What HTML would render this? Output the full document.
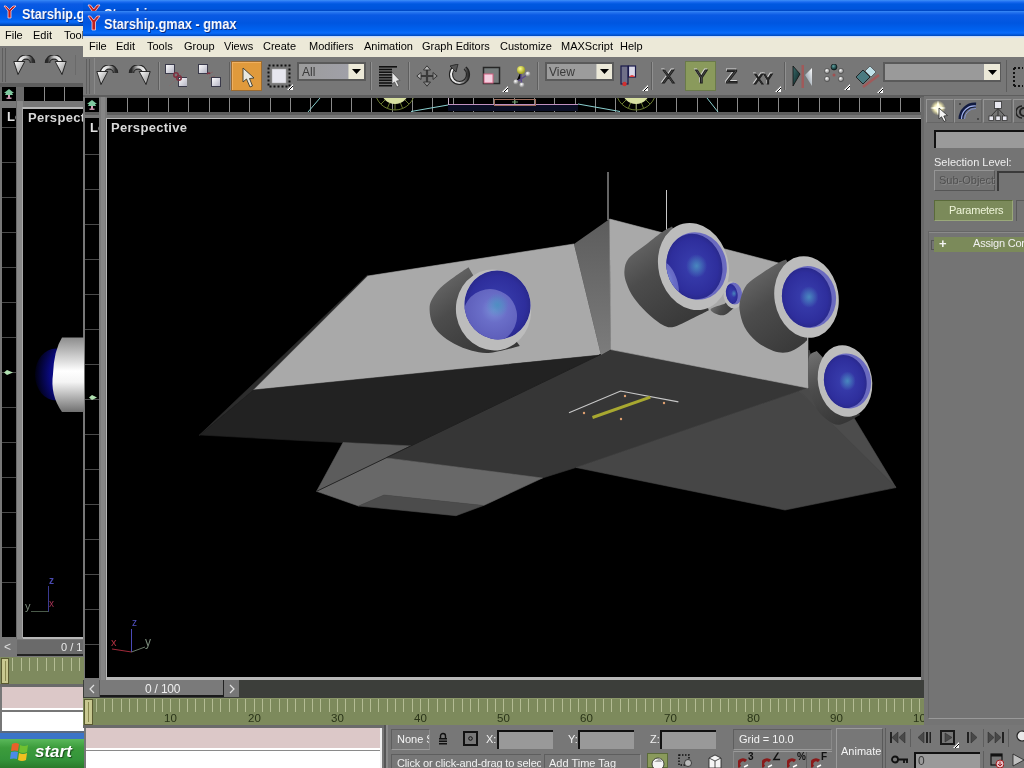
<!DOCTYPE html>
<html><head><meta charset="utf-8">
<style>
*{margin:0;padding:0;box-sizing:border-box}
html,body{width:1024px;height:768px;overflow:hidden;background:#777777;font-family:"Liberation Sans",sans-serif}
.a{position:absolute}
.t{position:absolute;white-space:nowrap;line-height:1;-webkit-font-smoothing:antialiased;will-change:transform}
.tb{background:linear-gradient(#3a8cf8 0px,#2a78f0 1px,#0a5ae4 4px,#0056e0 12px,#0062f0 19px,#0a6cfa 22px,#0054d4 24px,#003c98 26px)}
.tt{color:#fff;font-weight:bold;font-size:15px;text-shadow:1px 1px 0 #0a2a80;transform-origin:0 0;transform:scaleX(0.86)}
.menu{background:#ece9d8}
.mi{font-size:11px;color:#000}
.blk{background:#000}
</style></head><body>

<div class="a tb" style="left:0px;top:0px;width:84px;height:26px;"></div>
<svg class="a" style="left:3px;top:4px" width="14" height="16" viewBox="0 0 14 16"><path d="M1 2 L5 7 L5 14 L8 14 L8 7 L13 2 L10 2 L6.5 5.5 L3 2 Z" fill="#c02020" stroke="#ffd0d0" stroke-width="0.8"/></svg>
<div class="a t" style="left:22px;top:6px;color:#fff;font-weight:bold;font-size:15px;text-shadow:1px 1px 0 #0a2a80;transform-origin:0 0;transform:scaleX(0.85)">Starship.g</div>
<div class="a menu" style="left:0px;top:26px;width:84px;height:20px;"></div>
<div class="a t" style="left:5px;top:30px;font-size:11px;color:#000">File</div>
<div class="a t" style="left:33px;top:30px;font-size:11px;color:#000">Edit</div>
<div class="a t" style="left:64px;top:30px;font-size:11px;color:#000">Tools</div>
<div class="a " style="left:0px;top:46px;width:84px;height:37px;background:#777777"></div>
<div class="a " style="left:0px;top:83px;width:83px;height:4px;background:#5e5e5e"></div>
<div class="a " style="left:2px;top:48px;width:1px;height:34px;background:#5e5e5e"></div>
<div class="a " style="left:5px;top:48px;width:1px;height:34px;background:#5e5e5e"></div>
<div class="a " style="left:75px;top:55px;width:1px;height:20px;background:#6a6a6a"></div>
<div class="a " style="left:83px;top:0px;width:941px;height:11px;background:linear-gradient(#4090f8 0px,#1a6af0 2px,#0058e0 4px,#0054dc 9px,#0046c0 11px)"></div>
<div class="a tb" style="left:83px;top:11px;width:941px;height:26px;"></div>
<svg class="a" style="left:87px;top:14px" width="14" height="18" viewBox="0 0 14 18"><path d="M1 2 L5 8 L5 16 L8.5 16 L8.5 8 L13 2 L10 2 L6.7 6 L3.5 2 Z" fill="#c02020" stroke="#ffd0d0" stroke-width="0.8"/></svg>
<svg class="a" style="left:87px;top:3px" width="14" height="8" viewBox="0 0 14 8"><path d="M1 2 L5 8 L5 16 L8.5 16 L8.5 8 L13 2 L10 2 L6.7 6 L3.5 2 Z" fill="#c02020" stroke="#ffd0d0" stroke-width="0.8"/></svg>
<div class="a t" style="left:104px;top:16px;color:#fff;font-weight:bold;font-size:15px;text-shadow:1px 1px 0 #0a2a80;transform-origin:0 0;transform:scaleX(0.85)">Starship.gmax - gmax</div>
<div class="a t" style="left:104px;top:6px;color:#fff;font-weight:bold;font-size:15px;text-shadow:1px 1px 0 #0a2a80;transform-origin:0 0;transform:scaleX(0.85);clip-path:inset(0 0 10px 0)">Starship.gmax - gmax</div>
<div class="a " style="left:83px;top:36px;width:941px;height:2px;background:linear-gradient(#c0d4f4,#e4ecf4)"></div>
<div class="a menu" style="left:83px;top:38px;width:941px;height:19px;"></div>
<div class="a t" style="left:89px;top:41px;font-size:11px;color:#000">File</div>
<div class="a t" style="left:116px;top:41px;font-size:11px;color:#000">Edit</div>
<div class="a t" style="left:147px;top:41px;font-size:11px;color:#000">Tools</div>
<div class="a t" style="left:184px;top:41px;font-size:11px;color:#000">Group</div>
<div class="a t" style="left:224px;top:41px;font-size:11px;color:#000">Views</div>
<div class="a t" style="left:263px;top:41px;font-size:11px;color:#000">Create</div>
<div class="a t" style="left:309px;top:41px;font-size:11px;color:#000">Modifiers</div>
<div class="a t" style="left:364px;top:41px;font-size:11px;color:#000">Animation</div>
<div class="a t" style="left:422px;top:41px;font-size:11px;color:#000">Graph Editors</div>
<div class="a t" style="left:500px;top:41px;font-size:11px;color:#000">Customize</div>
<div class="a t" style="left:561px;top:41px;font-size:11px;color:#000">MAXScript</div>
<div class="a t" style="left:620px;top:41px;font-size:11px;color:#000">Help</div>
<div class="a " style="left:83px;top:57px;width:941px;height:38px;background:#777777"></div>
<div class="a " style="left:83px;top:95px;width:941px;height:3px;background:#5e5e5e"></div>
<div class="a " style="left:86px;top:59px;width:1px;height:35px;background:#5e5e5e"></div>
<div class="a " style="left:89px;top:59px;width:1px;height:35px;background:#5e5e5e"></div>
<svg width="0" height="0" style="position:absolute"><defs>
<linearGradient id="garc" x1="0" y1="0" x2="1" y2="0"><stop offset="0" stop-color="#f4f4f4"/><stop offset="0.45" stop-color="#d0d0d0"/><stop offset="1" stop-color="#303030"/></linearGradient>
<linearGradient id="garc2" x1="1" y1="0" x2="0" y2="0"><stop offset="0" stop-color="#f0f0f0"/><stop offset="0.5" stop-color="#c8c8c8"/><stop offset="1" stop-color="#2a2a2a"/></linearGradient>
<linearGradient id="ghead" x1="0" y1="0" x2="1" y2="1"><stop offset="0" stop-color="#ffffff"/><stop offset="1" stop-color="#888"/></linearGradient>
<linearGradient id="gsq" x1="0" y1="0" x2="1" y2="1"><stop offset="0" stop-color="#ffffff"/><stop offset="1" stop-color="#b0b0c0"/></linearGradient>
<linearGradient id="gtri" x1="0" y1="0" x2="1" y2="1"><stop offset="0" stop-color="#3a6a6a"/><stop offset="1" stop-color="#0a2020"/></linearGradient>
<linearGradient id="gtri2" x1="1" y1="0" x2="0" y2="1"><stop offset="0" stop-color="#ffffff"/><stop offset="1" stop-color="#708090"/></linearGradient>
<radialGradient id="gball" cx="0.4" cy="0.35" r="0.6"><stop offset="0" stop-color="#ffffff"/><stop offset="1" stop-color="#808080"/></radialGradient>
<radialGradient id="gballd" cx="0.4" cy="0.35" r="0.6"><stop offset="0" stop-color="#60a0a0"/><stop offset="1" stop-color="#0a2a2a"/></radialGradient>
<radialGradient id="gbally" cx="0.4" cy="0.35" r="0.6"><stop offset="0" stop-color="#ffff90"/><stop offset="1" stop-color="#a0a020"/></radialGradient>
</defs></svg>
<div class="a " style="left:94px;top:58px;width:1px;height:36px;background:#8a8a8a"></div>
<svg class="a" style="left:96px;top:65px" width="23" height="20" viewBox="0 0 23 20"><path d="M6.5 8 A6.5 6 0 0 1 19.5 8" fill="none" stroke="#262626" stroke-width="5.5"/><path d="M6.5 8 A6.5 6 0 0 1 19.5 8" fill="none" stroke="url(#garc)" stroke-width="3.2"/><path d="M0.8 6.5 L11.8 6.5 L5 19.5 Z" fill="url(#ghead)" stroke="#1a1a1a" stroke-width="0.9"/></svg>
<svg class="a" style="left:128px;top:65px" width="23" height="20" viewBox="0 0 23 20"><path d="M3.5 8 A6.5 6 0 0 1 16.5 8" fill="none" stroke="#262626" stroke-width="5.5"/><path d="M3.5 8 A6.5 6 0 0 1 16.5 8" fill="none" stroke="url(#garc2)" stroke-width="3.2"/><path d="M22.2 6.5 L11.2 6.5 L18 19.5 Z" fill="url(#ghead)" stroke="#1a1a1a" stroke-width="0.9"/></svg>
<div class="a " style="left:158px;top:62px;width:1px;height:28px;background:#5e5e5e"></div>
<div class="a " style="left:159px;top:62px;width:1px;height:28px;background:#909090"></div>
<svg class="a" style="left:163px;top:64px" width="24" height="24" viewBox="0 0 24 24"><path d="M2 14 L10 6 M6 22 L22 6" stroke="#8a6a6a" stroke-width="1" opacity="0.5"/><rect x="2.5" y="0.5" width="9" height="9" fill="url(#gsq)" stroke="#3a3a4a"/><rect x="15.5" y="13.5" width="9" height="9" fill="url(#gsq)" stroke="#3a3a4a"/><circle cx="13" cy="11" r="2.2" fill="none" stroke="#803040" stroke-width="1.6"/><circle cx="16" cy="14" r="2.2" fill="none" stroke="#803040" stroke-width="1.6"/></svg>
<svg class="a" style="left:197px;top:64px" width="24" height="24" viewBox="0 0 24 24"><path d="M10 10 L16 8 M12 14 L18 12" stroke="#8a5a5a" stroke-width="1" opacity="0.6"/><rect x="1.5" y="0.5" width="9" height="9" fill="url(#gsq)" stroke="#3a3a4a"/><rect x="14.5" y="13.5" width="9" height="9" fill="url(#gsq)" stroke="#3a3a4a"/><path d="M10 10 Q12 8 13 10" fill="none" stroke="#803040" stroke-width="1.4"/></svg>
<div class="a " style="left:229px;top:62px;width:1px;height:28px;background:#5e5e5e"></div>
<div class="a " style="left:230px;top:62px;width:1px;height:28px;background:#909090"></div>
<div class="a " style="left:231px;top:61px;width:31px;height:30px;background:#e09a3c;border:1px solid #9a6a30;box-shadow:inset 1px 1px 0 #f0b060"></div>
<svg class="a" style="left:242px;top:67px" width="14" height="22" viewBox="0 0 14 22"><path d="M1 1 L1 15 L4.5 12 L8 20 L10.5 19 L7.5 11.5 L12 11 Z" fill="#e8e8e0" stroke="#3a3a30" stroke-width="0.9"/></svg>
<svg class="a" style="left:267px;top:64px" width="26" height="26" viewBox="0 0 26 26"><rect x="1.5" y="1.5" width="21" height="21" fill="none" stroke="#111" stroke-width="2" stroke-dasharray="2 2"/><rect x="5" y="5" width="14" height="14" fill="#e6e6ee" stroke="#aaa" stroke-width="0.5"/><path d="M20 26 L26 20 L26 26 Z" fill="#fff"/><path d="M22 26 L26 22" stroke="#000"/></svg>
<div class="a " style="left:297px;top:62px;width:69px;height:19px;background:#5a5a5a"></div>
<div class="a " style="left:299px;top:64px;width:49px;height:15px;background:linear-gradient(90deg,#9c9c9c,#a0a0a8)"></div>
<div class="a t" style="left:302px;top:66px;font-size:12px;color:#3a3a3a">All</div>
<div class="a " style="left:348px;top:64px;width:16px;height:15px;background:#ece9d8;border-left:1px solid #c8c8c0"></div>
<svg class="a" style="left:352px;top:69px" width="9" height="5" viewBox="0 0 9 5"><path d="M0 0 L9 0 L4.5 5 Z" fill="#000"/></svg>
<div class="a " style="left:370px;top:62px;width:1px;height:28px;background:#5e5e5e"></div>
<div class="a " style="left:371px;top:62px;width:1px;height:28px;background:#909090"></div>
<svg class="a" style="left:379px;top:65px" width="22" height="24" viewBox="0 0 22 24"><rect x="0" y="1.0" width="18" height="1.6" fill="#111"/><rect x="0" y="3.7" width="13" height="1.6" fill="#111"/><rect x="0" y="6.4" width="13" height="1.6" fill="#111"/><rect x="0" y="9.1" width="13" height="1.6" fill="#111"/><rect x="0" y="11.8" width="13" height="1.6" fill="#111"/><rect x="0" y="14.5" width="13" height="1.6" fill="#111"/><rect x="0" y="17.2" width="13" height="1.6" fill="#111"/><rect x="0" y="19.9" width="13" height="1.6" fill="#111"/><path d="M13 7 L13 19 L15.5 17 L18 22 L20 21 L17.5 16 L21 15.5 Z" fill="#e8e8e8" stroke="#444" stroke-width="0.7"/></svg>
<div class="a " style="left:408px;top:62px;width:1px;height:28px;background:#5e5e5e"></div>
<div class="a " style="left:409px;top:62px;width:1px;height:28px;background:#909090"></div>
<svg class="a" style="left:416px;top:65px" width="22" height="22" viewBox="0 0 22 22"><defs><linearGradient id="mvg" x1="0" y1="0" x2="1" y2="1"><stop offset="0" stop-color="#d8d8d8"/><stop offset="1" stop-color="#707070"/></linearGradient></defs><path d="M11 4 L11 18 M4 11 L18 11" stroke="#3a3a3a" stroke-width="2.2"/><path d="M11 0.8 L14.5 5 L7.5 5 Z M11 21.2 L14.5 17 L7.5 17 Z M0.8 11 L5 7.5 L5 14.5 Z M21.2 11 L17 7.5 L17 14.5 Z" fill="url(#mvg)" stroke="#2e2e2e" stroke-width="0.9" stroke-linejoin="round"/></svg>
<svg class="a" style="left:448px;top:64px" width="23" height="23" viewBox="0 0 23 23"><path d="M6 4 A8.5 8.5 0 1 0 17 4" fill="none" stroke="#222" stroke-width="4.2"/><path d="M6 4 A8.5 8.5 0 1 0 17 4" fill="none" stroke="url(#garc)" stroke-width="2"/><path d="M2 2 L10 0 L8 8 Z" fill="#555" stroke="#222" stroke-width="0.8"/></svg>
<svg class="a" style="left:482px;top:66px" width="26" height="26" viewBox="0 0 26 26"><rect x="1.5" y="1.5" width="16" height="16" fill="#767c7c" stroke="#262626" stroke-width="1.5"/><rect x="2" y="8" width="9" height="9" fill="#f4d0e0" stroke="#d06080" stroke-width="1"/><path d="M20 26 L26 20 L26 26 Z" fill="#fff"/><path d="M22 26 L26 22" stroke="#000"/></svg>
<svg class="a" style="left:513px;top:65px" width="20" height="23" viewBox="0 0 20 23"><path d="M8 6 L8 14 L3 17 M8 14 L14 10 M8 14 L9 20" stroke="#5a4a8a" stroke-width="1.5"/><circle cx="8" cy="5" r="4" fill="url(#gbally)"/><circle cx="15" cy="9" r="2.6" fill="url(#gball)"/><circle cx="3" cy="17" r="2.6" fill="url(#gball)"/><circle cx="9" cy="20" r="2.6" fill="url(#gball)"/></svg>
<div class="a " style="left:537px;top:62px;width:1px;height:28px;background:#5e5e5e"></div>
<div class="a " style="left:538px;top:62px;width:1px;height:28px;background:#909090"></div>
<div class="a " style="left:545px;top:62px;width:69px;height:19px;background:#5a5a5a"></div>
<div class="a " style="left:547px;top:64px;width:49px;height:15px;background:#9c9c9c"></div>
<div class="a t" style="left:549px;top:66px;font-size:12px;color:#3a3a3a">View</div>
<div class="a " style="left:596px;top:64px;width:16px;height:15px;background:#ece9d8;border-left:1px solid #c8c8c0"></div>
<svg class="a" style="left:600px;top:69px" width="9" height="5" viewBox="0 0 9 5"><path d="M0 0 L9 0 L4.5 5 Z" fill="#000"/></svg>
<svg class="a" style="left:620px;top:65px" width="28" height="26" viewBox="0 0 28 26"><rect x="1" y="1" width="7" height="18" fill="#707088" stroke="#1a1a4a" stroke-width="1.2"/><circle cx="4.5" cy="19" r="2.2" fill="#d03030"/><rect x="8.5" y="1" width="7" height="11" fill="#d8d8e8" stroke="#1a1a4a" stroke-width="1.2"/><path d="M9 12 Q12 8 15 12" fill="#e04040"/><path d="M22 26 L28 20 L28 26 Z" fill="#fff"/><path d="M24 26 L28 22" stroke="#000"/></svg>
<div class="a " style="left:651px;top:62px;width:1px;height:28px;background:#5e5e5e"></div>
<div class="a " style="left:652px;top:62px;width:1px;height:28px;background:#909090"></div>
<svg class="a" style="left:660px;top:67px;will-change:transform" width="20" height="20" viewBox="0 0 20 20"><text x="1.2" y="15.2" font-family="Liberation Sans" font-size="19" fill="none" stroke="#d4d4d4" stroke-width="1">X</text><text x="2" y="16" font-family="Liberation Sans" font-size="19" fill="#5a5a5a" stroke="#1e1e1e" stroke-width="1.1">X</text></svg>
<div class="a " style="left:685px;top:61px;width:31px;height:30px;background:#8a9a5c;border:1px solid #6a7a4a"></div>
<svg class="a" style="left:693px;top:67px;will-change:transform" width="20" height="20" viewBox="0 0 20 20"><text x="1.2" y="15.2" font-family="Liberation Sans" font-size="19" fill="none" stroke="#d4d4d4" stroke-width="1">Y</text><text x="2" y="16" font-family="Liberation Sans" font-size="19" fill="#5a5a5a" stroke="#1e1e1e" stroke-width="1.1">Y</text></svg>
<svg class="a" style="left:724px;top:67px;will-change:transform" width="20" height="20" viewBox="0 0 20 20"><text x="1.2" y="15.2" font-family="Liberation Sans" font-size="19" fill="none" stroke="#d4d4d4" stroke-width="1">Z</text><text x="2" y="16" font-family="Liberation Sans" font-size="19" fill="#5a5a5a" stroke="#1e1e1e" stroke-width="1.1">Z</text></svg>
<svg class="a" style="left:752px;top:68px;will-change:transform" width="26" height="20" viewBox="0 0 26 20"><text x="1.2" y="15.2" font-family="Liberation Sans" font-size="14" fill="none" stroke="#d4d4d4" stroke-width="1">XY</text><text x="2" y="16" font-family="Liberation Sans" font-size="14" fill="#5a5a5a" stroke="#1e1e1e" stroke-width="1.1">XY</text></svg>
<svg class="a" style="left:775px;top:86px" width="6" height="6" viewBox="0 0 6 6"><path d="M0 6 L6 0 L6 6 Z" fill="#ffffff"/><path d="M2 6 L6 2" stroke="#000" stroke-width="1"/></svg>
<div class="a " style="left:784px;top:62px;width:1px;height:28px;background:#5e5e5e"></div>
<div class="a " style="left:785px;top:62px;width:1px;height:28px;background:#909090"></div>
<svg class="a" style="left:791px;top:64px" width="24" height="24" viewBox="0 0 24 24"><path d="M2 2 L9 10 L2 22 Z" fill="url(#gtri)" stroke="#111" stroke-width="0.8"/><path d="M21 4 L14 11 L21 22 Z" fill="url(#gtri2)"/><rect x="10.5" y="1" width="2.5" height="23" fill="#a05a5a"/></svg>
<svg class="a" style="left:824px;top:64px" width="26" height="26" viewBox="0 0 26 26"><circle cx="10" cy="11" r="1.5" fill="#a05050"/><circle cx="3.1" cy="15.0" r="2.6" fill="url(#gball)" stroke="#333" stroke-width="0.5"/><circle cx="3.1" cy="7.0" r="2.6" fill="url(#gball)" stroke="#333" stroke-width="0.5"/><circle cx="10.0" cy="3.0" r="2.6" fill="url(#gball)" stroke="#333" stroke-width="0.5"/><circle cx="16.9" cy="7.0" r="2.6" fill="url(#gball)" stroke="#333" stroke-width="0.5"/><circle cx="16.9" cy="15.0" r="2.6" fill="url(#gball)" stroke="#333" stroke-width="0.5"/><circle cx="10" cy="3" r="3" fill="url(#gballd)" stroke="#111" stroke-width="0.6"/><path d="M20 26 L26 20 L26 26 Z" fill="#fff"/><path d="M22 26 L26 22" stroke="#000"/></svg>
<svg class="a" style="left:855px;top:65px" width="28" height="28" viewBox="0 0 28 28"><path d="M1 12 L8 5 L15 12 L8 19 Z" fill="#4a7a80" stroke="#111" stroke-width="0.8"/><path d="M10 6 L15 1 L21 7 L16 12 Z" fill="#c0e0e8" stroke="#333" stroke-width="0.6"/><path d="M8 22 L24 10" stroke="#a05a5a" stroke-width="2.5"/><path d="M22 28 L28 22 L28 28 Z" fill="#fff"/><path d="M24 28 L28 24" stroke="#000"/></svg>
<div class="a " style="left:883px;top:62px;width:118px;height:20px;background:#5a5a5a"></div>
<div class="a " style="left:885px;top:64px;width:99px;height:16px;background:#9a9a9a"></div>
<div class="a " style="left:984px;top:64px;width:16px;height:16px;background:#ece9d8"></div>
<svg class="a" style="left:988px;top:70px" width="9" height="5" viewBox="0 0 9 5"><path d="M0 0 L9 0 L4.5 5 Z" fill="#000"/></svg>
<div class="a " style="left:1006px;top:60px;width:1px;height:32px;background:#5e5e5e"></div>
<div class="a " style="left:1008px;top:60px;width:16px;height:34px;background:#777"></div>
<svg class="a" style="left:1013px;top:67px" width="11" height="20" viewBox="0 0 11 20"><path d="M1 1 L10 1 M1 1 L1 19 M1 19 L10 19" stroke="#111" stroke-width="2" stroke-dasharray="2 2"/></svg>
<svg class="a" style="left:13px;top:55px" width="23" height="20" viewBox="0 0 23 20"><path d="M6.5 8 A6.5 6 0 0 1 19.5 8" fill="none" stroke="#262626" stroke-width="5.5"/><path d="M6.5 8 A6.5 6 0 0 1 19.5 8" fill="none" stroke="url(#garc)" stroke-width="3.2"/><path d="M0.8 6.5 L11.8 6.5 L5 19.5 Z" fill="url(#ghead)" stroke="#1a1a1a" stroke-width="0.9"/></svg>
<svg class="a" style="left:44px;top:55px" width="23" height="20" viewBox="0 0 23 20"><path d="M3.5 8 A6.5 6 0 0 1 16.5 8" fill="none" stroke="#262626" stroke-width="5.5"/><path d="M3.5 8 A6.5 6 0 0 1 16.5 8" fill="none" stroke="url(#garc2)" stroke-width="3.2"/><path d="M22.2 6.5 L11.2 6.5 L18 19.5 Z" fill="url(#ghead)" stroke="#1a1a1a" stroke-width="0.9"/></svg>
<div class="a " style="left:0px;top:87px;width:83px;height:14px;background:#6a6a6a"></div>
<div class="a blk" style="left:2px;top:87px;width:14px;height:14px;"></div>
<div class="a blk" style="left:24px;top:87px;width:59px;height:14px;"></div>
<div class="a " style="left:44px;top:87px;width:1px;height:14px;background:#8a8a8a"></div>
<div class="a " style="left:64px;top:87px;width:1px;height:14px;background:#8a8a8a"></div>
<div class="a " style="left:0px;top:101px;width:83px;height:7px;background:#777777"></div>
<div class="a " style="left:83px;top:98px;width:841px;height:15px;background:#6a6a6a"></div>
<div class="a blk" style="left:85px;top:98px;width:14px;height:14px;"></div>
<div class="a blk" style="left:107px;top:98px;width:814px;height:14px;"></div>
<div class="a " style="left:127px;top:98px;width:1px;height:14px;background:#8a8a8a"></div>
<div class="a " style="left:148px;top:98px;width:1px;height:14px;background:#8a8a8a"></div>
<div class="a " style="left:168px;top:98px;width:1px;height:14px;background:#8a8a8a"></div>
<div class="a " style="left:188px;top:98px;width:1px;height:14px;background:#8a8a8a"></div>
<div class="a " style="left:209px;top:98px;width:1px;height:14px;background:#8a8a8a"></div>
<div class="a " style="left:229px;top:98px;width:1px;height:14px;background:#8a8a8a"></div>
<div class="a " style="left:249px;top:98px;width:1px;height:14px;background:#8a8a8a"></div>
<div class="a " style="left:270px;top:98px;width:1px;height:14px;background:#8a8a8a"></div>
<div class="a " style="left:290px;top:98px;width:1px;height:14px;background:#8a8a8a"></div>
<div class="a " style="left:310px;top:98px;width:1px;height:14px;background:#8a8a8a"></div>
<div class="a " style="left:331px;top:98px;width:1px;height:14px;background:#8a8a8a"></div>
<div class="a " style="left:351px;top:98px;width:1px;height:14px;background:#8a8a8a"></div>
<div class="a " style="left:371px;top:98px;width:1px;height:14px;background:#8a8a8a"></div>
<div class="a " style="left:392px;top:98px;width:1px;height:14px;background:#8a8a8a"></div>
<div class="a " style="left:412px;top:98px;width:1px;height:14px;background:#8a8a8a"></div>
<div class="a " style="left:432px;top:98px;width:1px;height:14px;background:#8a8a8a"></div>
<div class="a " style="left:453px;top:98px;width:1px;height:14px;background:#8a8a8a"></div>
<div class="a " style="left:473px;top:98px;width:1px;height:14px;background:#8a8a8a"></div>
<div class="a " style="left:493px;top:98px;width:1px;height:14px;background:#8a8a8a"></div>
<div class="a " style="left:514px;top:98px;width:1px;height:14px;background:#8a8a8a"></div>
<div class="a " style="left:534px;top:98px;width:1px;height:14px;background:#8a8a8a"></div>
<div class="a " style="left:554px;top:98px;width:1px;height:14px;background:#8a8a8a"></div>
<div class="a " style="left:575px;top:98px;width:1px;height:14px;background:#8a8a8a"></div>
<div class="a " style="left:595px;top:98px;width:1px;height:14px;background:#8a8a8a"></div>
<div class="a " style="left:615px;top:98px;width:1px;height:14px;background:#8a8a8a"></div>
<div class="a " style="left:636px;top:98px;width:1px;height:14px;background:#8a8a8a"></div>
<div class="a " style="left:656px;top:98px;width:1px;height:14px;background:#8a8a8a"></div>
<div class="a " style="left:676px;top:98px;width:1px;height:14px;background:#8a8a8a"></div>
<div class="a " style="left:697px;top:98px;width:1px;height:14px;background:#8a8a8a"></div>
<div class="a " style="left:717px;top:98px;width:1px;height:14px;background:#8a8a8a"></div>
<div class="a " style="left:737px;top:98px;width:1px;height:14px;background:#8a8a8a"></div>
<div class="a " style="left:758px;top:98px;width:1px;height:14px;background:#8a8a8a"></div>
<div class="a " style="left:778px;top:98px;width:1px;height:14px;background:#8a8a8a"></div>
<div class="a " style="left:798px;top:98px;width:1px;height:14px;background:#8a8a8a"></div>
<div class="a " style="left:819px;top:98px;width:1px;height:14px;background:#8a8a8a"></div>
<div class="a " style="left:839px;top:98px;width:1px;height:14px;background:#8a8a8a"></div>
<div class="a " style="left:859px;top:98px;width:1px;height:14px;background:#8a8a8a"></div>
<div class="a " style="left:880px;top:98px;width:1px;height:14px;background:#8a8a8a"></div>
<div class="a " style="left:900px;top:98px;width:1px;height:14px;background:#8a8a8a"></div>
<div class="a " style="left:920px;top:98px;width:1px;height:14px;background:#8a8a8a"></div>
<div class="a " style="left:83px;top:112px;width:841px;height:3px;background:#5e5e5e"></div>
<div class="a " style="left:83px;top:115px;width:841px;height:3px;background:#777777"></div>
<div class="a blk" style="left:2px;top:108px;width:14px;height:529px;"></div>
<div class="a " style="left:2px;top:127px;width:14px;height:1px;background:#4a4a4a"></div>
<div class="a " style="left:2px;top:162px;width:14px;height:1px;background:#4a4a4a"></div>
<div class="a " style="left:2px;top:197px;width:14px;height:1px;background:#4a4a4a"></div>
<div class="a " style="left:2px;top:232px;width:14px;height:1px;background:#4a4a4a"></div>
<div class="a " style="left:2px;top:267px;width:14px;height:1px;background:#4a4a4a"></div>
<div class="a " style="left:2px;top:302px;width:14px;height:1px;background:#4a4a4a"></div>
<div class="a " style="left:2px;top:337px;width:14px;height:1px;background:#4a4a4a"></div>
<div class="a " style="left:2px;top:372px;width:14px;height:1px;background:#4a4a4a"></div>
<div class="a " style="left:2px;top:407px;width:14px;height:1px;background:#4a4a4a"></div>
<div class="a " style="left:2px;top:442px;width:14px;height:1px;background:#4a4a4a"></div>
<div class="a " style="left:2px;top:477px;width:14px;height:1px;background:#4a4a4a"></div>
<div class="a " style="left:2px;top:512px;width:14px;height:1px;background:#4a4a4a"></div>
<div class="a " style="left:2px;top:547px;width:14px;height:1px;background:#4a4a4a"></div>
<div class="a " style="left:2px;top:582px;width:14px;height:1px;background:#4a4a4a"></div>
<div class="a " style="left:16px;top:101px;width:7px;height:540px;background:#888888;border-left:1px solid #6a6a6a"></div>
<div class="a " style="left:22px;top:107px;width:2px;height:531px;background:#a8a8a8"></div>
<div class="a " style="left:23px;top:107px;width:61px;height:2px;background:#b8b8b8"></div>
<div class="a blk" style="left:23px;top:109px;width:61px;height:528px;"></div>
<div class="a " style="left:23px;top:637px;width:61px;height:3px;background:#b8b8b8"></div>
<div class="a t" style="left:28px;top:111px;font-size:13px;color:#d8d8d8;font-weight:bold;letter-spacing:0.3px">Perspect</div>
<div class="a t" style="left:7px;top:110px;font-size:13px;color:#e0e0e0;font-weight:bold;width:9px;overflow:hidden">Left</div>
<div class="a " style="left:83px;top:97px;width:2px;height:671px;background:#777777"></div>
<div class="a blk" style="left:85px;top:118px;width:14px;height:560px;"></div>
<div class="a " style="left:85px;top:154px;width:14px;height:1px;background:#4a4a4a"></div>
<div class="a " style="left:85px;top:189px;width:14px;height:1px;background:#4a4a4a"></div>
<div class="a " style="left:85px;top:224px;width:14px;height:1px;background:#4a4a4a"></div>
<div class="a " style="left:85px;top:259px;width:14px;height:1px;background:#4a4a4a"></div>
<div class="a " style="left:85px;top:294px;width:14px;height:1px;background:#4a4a4a"></div>
<div class="a " style="left:85px;top:329px;width:14px;height:1px;background:#4a4a4a"></div>
<div class="a " style="left:85px;top:364px;width:14px;height:1px;background:#4a4a4a"></div>
<div class="a " style="left:85px;top:399px;width:14px;height:1px;background:#4a4a4a"></div>
<div class="a " style="left:85px;top:434px;width:14px;height:1px;background:#4a4a4a"></div>
<div class="a " style="left:85px;top:469px;width:14px;height:1px;background:#4a4a4a"></div>
<div class="a " style="left:85px;top:504px;width:14px;height:1px;background:#4a4a4a"></div>
<div class="a " style="left:85px;top:539px;width:14px;height:1px;background:#4a4a4a"></div>
<div class="a " style="left:85px;top:574px;width:14px;height:1px;background:#4a4a4a"></div>
<div class="a " style="left:85px;top:609px;width:14px;height:1px;background:#4a4a4a"></div>
<div class="a " style="left:85px;top:644px;width:14px;height:1px;background:#4a4a4a"></div>
<div class="a " style="left:99px;top:97px;width:8px;height:583px;background:#7a7a7a"></div>
<div class="a " style="left:101px;top:97px;width:4px;height:583px;background:#868686"></div>
<div class="a " style="left:106px;top:118px;width:819px;height:562px;background:#b8b8b8"></div>
<div class="a blk" style="left:107px;top:119px;width:814px;height:558px;"></div>
<div class="a t" style="left:111px;top:121px;font-size:13px;color:#d8d8d8;font-weight:bold;letter-spacing:0.3px">Perspective</div>
<div class="a t" style="left:90px;top:121px;font-size:13px;color:#e0e0e0;font-weight:bold;width:9px;overflow:hidden">Left</div>
<svg class="a" style="left:0;top:0" width="1024" height="768" viewBox="0 0 1024 768"><defs><clipPath id="vpclip"><rect x="107" y="119" width="814" height="558"/></clipPath></defs><g clip-path="url(#vpclip)"><defs><linearGradient id="body0" gradientUnits="userSpaceOnUse" x1="429.6" y1="267.3" x2="493.5" y2="352.7"><stop offset="0" stop-color="#747474"/><stop offset="0.45" stop-color="#4c4c4c"/><stop offset="1" stop-color="#363636"/></linearGradient><radialGradient id="navy0" cx="0.5" cy="0.5" r="0.6"><stop offset="0" stop-color="#3a40b0"/><stop offset="0.7" stop-color="#2e2e9c"/><stop offset="1" stop-color="#24247a"/></radialGradient><radialGradient id="sph0" cx="0.6" cy="0.4" r="0.6"><stop offset="0" stop-color="#7a90d8"/><stop offset="0.4" stop-color="#6a6ec8"/><stop offset="1" stop-color="#5c5cb8"/></radialGradient><radialGradient id="hl0"><stop offset="0" stop-color="#4a90c0" stop-opacity="0.9"/><stop offset="1" stop-color="#4a90c0" stop-opacity="0"/></radialGradient><clipPath id="ic0"><ellipse cx="497.5" cy="305" rx="33" ry="34.5" transform="rotate(-10 497.5 305)"/></clipPath><linearGradient id="body1" gradientUnits="userSpaceOnUse" x1="624.4" y1="226.5" x2="693.5" y2="326.7"><stop offset="0" stop-color="#747474"/><stop offset="0.45" stop-color="#4c4c4c"/><stop offset="1" stop-color="#363636"/></linearGradient><radialGradient id="navy1" cx="0.5" cy="0.5" r="0.6"><stop offset="0" stop-color="#3a40b0"/><stop offset="0.7" stop-color="#2e2e9c"/><stop offset="1" stop-color="#24247a"/></radialGradient><radialGradient id="sph1" cx="0.6" cy="0.4" r="0.6"><stop offset="0" stop-color="#7a90d8"/><stop offset="0.4" stop-color="#6a6ec8"/><stop offset="1" stop-color="#5c5cb8"/></radialGradient><radialGradient id="hl1"><stop offset="0" stop-color="#4a90c0" stop-opacity="0.9"/><stop offset="1" stop-color="#4a90c0" stop-opacity="0"/></radialGradient><clipPath id="ic1"><ellipse cx="696.6" cy="266" rx="30" ry="34" transform="rotate(-14 696.6 266)"/></clipPath><linearGradient id="body2" gradientUnits="userSpaceOnUse" x1="711" y1="304" x2="733" y2="315"><stop offset="0" stop-color="#747474"/><stop offset="0.45" stop-color="#4c4c4c"/><stop offset="1" stop-color="#363636"/></linearGradient><radialGradient id="navy2" cx="0.5" cy="0.5" r="0.6"><stop offset="0" stop-color="#3a40b0"/><stop offset="0.7" stop-color="#2e2e9c"/><stop offset="1" stop-color="#24247a"/></radialGradient><radialGradient id="sph2" cx="0.6" cy="0.4" r="0.6"><stop offset="0" stop-color="#7a90d8"/><stop offset="0.4" stop-color="#6a6ec8"/><stop offset="1" stop-color="#5c5cb8"/></radialGradient><radialGradient id="hl2"><stop offset="0" stop-color="#4a90c0" stop-opacity="0.9"/><stop offset="1" stop-color="#4a90c0" stop-opacity="0"/></radialGradient><clipPath id="ic2"><ellipse cx="734" cy="293.5" rx="8" ry="11" transform="rotate(-10 734 293.5)"/></clipPath><linearGradient id="body3" gradientUnits="userSpaceOnUse" x1="739.6" y1="259.5" x2="806.5" y2="352.2"><stop offset="0" stop-color="#747474"/><stop offset="0.45" stop-color="#4c4c4c"/><stop offset="1" stop-color="#363636"/></linearGradient><radialGradient id="navy3" cx="0.5" cy="0.5" r="0.6"><stop offset="0" stop-color="#3a40b0"/><stop offset="0.7" stop-color="#2e2e9c"/><stop offset="1" stop-color="#24247a"/></radialGradient><radialGradient id="sph3" cx="0.6" cy="0.4" r="0.6"><stop offset="0" stop-color="#7a90d8"/><stop offset="0.4" stop-color="#6a6ec8"/><stop offset="1" stop-color="#5c5cb8"/></radialGradient><radialGradient id="hl3"><stop offset="0" stop-color="#4a90c0" stop-opacity="0.9"/><stop offset="1" stop-color="#4a90c0" stop-opacity="0"/></radialGradient><clipPath id="ic3"><ellipse cx="809" cy="297" rx="27" ry="31" transform="rotate(-10 809 297)"/></clipPath><linearGradient id="body4" gradientUnits="userSpaceOnUse" x1="808.3" y1="351" x2="845" y2="424.5"><stop offset="0" stop-color="#747474"/><stop offset="0.45" stop-color="#4c4c4c"/><stop offset="1" stop-color="#363636"/></linearGradient><radialGradient id="navy4" cx="0.5" cy="0.5" r="0.6"><stop offset="0" stop-color="#3a40b0"/><stop offset="0.7" stop-color="#2e2e9c"/><stop offset="1" stop-color="#24247a"/></radialGradient><radialGradient id="sph4" cx="0.6" cy="0.4" r="0.6"><stop offset="0" stop-color="#7a90d8"/><stop offset="0.4" stop-color="#6a6ec8"/><stop offset="1" stop-color="#5c5cb8"/></radialGradient><radialGradient id="hl4"><stop offset="0" stop-color="#4a90c0" stop-opacity="0.9"/><stop offset="1" stop-color="#4a90c0" stop-opacity="0"/></radialGradient><clipPath id="ic4"><ellipse cx="847.5" cy="381" rx="23.5" ry="27.7" transform="rotate(-10 847.5 381)"/></clipPath><linearGradient id="side" x1="0" y1="0" x2="0" y2="1"><stop offset="0" stop-color="#5c5c5c"/><stop offset="1" stop-color="#7c7c7c"/></linearGradient></defs><polygon points="367.7,275.0 253.6,390.0 199.0,435.5" fill="#2c2c2c" stroke="#2c2c2c" stroke-width="0.6" stroke-linejoin="round" /><polygon points="367.7,276.0 574.0,244.0 601.0,355.0 253.6,390.0" fill="#a9a9a9" stroke="#a9a9a9" stroke-width="0.6" stroke-linejoin="round" /><polygon points="253.6,390.0 601.0,355.0 612.0,349.0 411.0,445.9 300.0,440.5 200.0,435.0" fill="#222222" stroke="#222222" stroke-width="0.6" stroke-linejoin="round" /><polygon points="343.0,442.5 411.0,445.9 316.6,491.3" fill="#5c5c5c" stroke="#5c5c5c" stroke-width="0.6" stroke-linejoin="round" /><polygon points="612.0,349.0 810.0,388.0 799.0,391.0 576.0,467.5 542.5,478.0 386.0,457.9" fill="#363636" stroke="#363636" stroke-width="0.6" stroke-linejoin="round" /><polygon points="316.6,491.3 386.0,457.9 542.5,478.0 483.6,505.5 384.0,495.0 358.6,506.0" fill="#686868" stroke="#686868" stroke-width="0.6" stroke-linejoin="round" /><polygon points="358.6,506.0 384.0,495.0 483.6,505.5 456.0,515.7" fill="#4c4c4c" stroke="#4c4c4c" stroke-width="0.6" stroke-linejoin="round" /><polygon points="576.0,467.5 799.0,391.0 896.0,487.6 785.0,510.0" fill="#464646" stroke="#464646" stroke-width="0.6" stroke-linejoin="round" /><polygon points="799.0,391.0 832.0,420.0 854.0,418.0 896.0,487.6" fill="#4c4c4c" stroke="#4c4c4c" stroke-width="0.6" stroke-linejoin="round" /><polygon points="808.0,388.0 809.0,350.0 834.0,423.0 799.0,391.0" fill="#4a4a4a" stroke="#4a4a4a" stroke-width="0.6" stroke-linejoin="round" /><line x1="316.6" y1="491.3" x2="612" y2="349" stroke="#1e1e1e" stroke-width="0.9"/><polygon points="574.0,244.0 609.6,219.0 611.0,349.6 601.0,355.0" fill="url(#side)" /><polygon points="609.6,219.0 790.0,266.0 808.0,330.0 808.0,388.0 611.0,349.6" fill="#a9a9a9" stroke="#a9a9a9" stroke-width="0.6" stroke-linejoin="round" /><line x1="608" y1="172" x2="608" y2="220" stroke="#c8c8c8" stroke-width="1"/><line x1="666.5" y1="190" x2="666.5" y2="232" stroke="#c8c8c8" stroke-width="1"/><path d="M493.5,310.0 L468.5,267.3 C466.1,268.9 458.9,273.5 454.2,276.9 C449.5,280.3 444.3,283.9 440.5,287.8 C436.7,291.7 433.4,296.5 431.6,300.1 C429.8,303.8 429.5,305.8 429.6,309.7 C429.7,313.6 430.5,319.2 432.3,323.3 C434.1,327.4 436.9,330.9 440.5,334.3 C444.1,337.7 449.0,341.1 454.2,343.8 C459.4,346.5 465.8,349.2 471.9,350.7 C478.0,352.2 483.0,353.5 491.0,352.7 C499.0,351.9 515.0,347.0 519.8,345.9 Z" fill="url(#body0)"/><ellipse cx="493.5" cy="310" rx="37.5" ry="40.5" transform="rotate(-10 493.5 310)" fill="#bcbcbc"/><ellipse cx="497.5" cy="305" rx="33" ry="34.5" transform="rotate(-10 497.5 305)" fill="#6a6ac0"/><g clip-path="url(#ic0)"><ellipse cx="497.5" cy="305" rx="33" ry="34.5" transform="rotate(-10 497.5 305)" fill="url(#navy0)"/><ellipse cx="490" cy="316" rx="27" ry="27" transform="rotate(-10 490 316)" fill="url(#sph0)"/><ellipse cx="497.5" cy="305" rx="11.549999999999999" ry="12.075" fill="url(#hl0)"/></g><path d="M693.5,266.5 L672.0,226.5 C670.2,227.5 666.2,229.2 661.5,232.4 C656.8,235.7 649.5,241.7 644.0,246.0 C638.5,250.3 631.8,254.3 628.5,258.5 C625.2,262.7 624.7,267.0 624.4,271.2 C624.1,275.5 625.1,279.3 626.7,283.8 C628.3,288.2 630.5,293.1 633.8,297.8 C637.0,302.5 641.6,307.5 646.2,311.9 C650.9,316.3 657.2,321.9 661.9,324.4 C666.6,326.9 668.7,328.0 674.4,326.7 C680.1,325.4 690.5,319.3 696.2,316.6 C702.0,313.9 706.7,311.4 708.8,310.3 Z" fill="url(#body1)"/><ellipse cx="693.5" cy="266.5" rx="35" ry="44" transform="rotate(-14 693.5 266.5)" fill="#bcbcbc"/><ellipse cx="696.6" cy="266" rx="30" ry="34" transform="rotate(-14 696.6 266)" fill="#6a6ac0"/><g clip-path="url(#ic1)"><ellipse cx="694.1" cy="266.5" rx="28" ry="33" transform="rotate(-14 694.1 266.5)" fill="url(#navy1)"/><ellipse cx="666" cy="285" rx="12" ry="24" transform="rotate(-14 666 285)" fill="url(#sph1)"/><ellipse cx="696.6" cy="266" rx="10.5" ry="11.899999999999999" fill="url(#hl1)"/></g><path d="M733.0,295.0 L724.4,304.0 C722.2,304.8 712.6,307.2 711.0,308.8 C709.4,310.3 712.8,312.4 715.0,313.4 C717.2,314.4 721.3,315.9 724.4,315.0 C727.5,314.1 732.2,309.2 733.8,308.0 Z" fill="url(#body2)"/><ellipse cx="733" cy="295" rx="9.5" ry="13.7" transform="rotate(-10 733 295)" fill="#bcbcbc"/><ellipse cx="734" cy="293.5" rx="8" ry="11" transform="rotate(-10 734 293.5)" fill="#6a6ac0"/><g clip-path="url(#ic2)"><ellipse cx="731.5" cy="294.0" rx="6" ry="10" transform="rotate(-10 731.5 294.0)" fill="url(#navy2)"/><ellipse cx="734" cy="293.5" rx="2.8" ry="3.8499999999999996" fill="url(#hl2)"/></g><path d="M806.5,297.0 L786.0,259.5 C784.7,260.1 782.5,260.6 778.2,263.1 C773.9,265.6 765.2,270.9 760.0,274.5 C754.8,278.1 750.1,280.7 746.9,284.6 C743.7,288.5 742.0,293.8 740.8,298.0 C739.6,302.2 739.0,305.2 739.6,310.0 C740.2,314.8 741.7,321.7 744.5,326.9 C747.3,332.1 751.7,337.4 756.5,341.4 C761.3,345.4 768.2,349.2 773.4,351.0 C778.6,352.8 783.4,353.0 787.8,352.2 C792.2,351.4 796.7,348.2 799.9,346.2 C803.1,344.2 805.9,341.2 807.1,340.2 Z" fill="url(#body3)"/><ellipse cx="806.5" cy="297" rx="32" ry="41" transform="rotate(-10 806.5 297)" fill="#bcbcbc"/><ellipse cx="809" cy="297" rx="27" ry="31" transform="rotate(-10 809 297)" fill="#6a6ac0"/><g clip-path="url(#ic3)"><ellipse cx="806.5" cy="297.5" rx="25" ry="30" transform="rotate(-10 806.5 297.5)" fill="url(#navy3)"/><ellipse cx="809" cy="297" rx="9.45" ry="10.85" fill="url(#hl3)"/></g><path d="M845.0,381.0 L816.7,351.0 C815.5,351.8 810.9,352.6 809.5,355.8 C808.1,359.0 808.3,364.7 808.3,370.3 C808.3,375.9 808.1,383.2 809.5,389.6 C810.9,396.0 813.5,403.7 816.7,408.9 C819.9,414.1 824.8,418.3 828.8,420.9 C832.8,423.5 835.6,425.5 840.8,424.5 C846.0,423.5 856.8,416.6 860.0,415.0 Z" fill="url(#body4)"/><ellipse cx="845" cy="381" rx="27" ry="36" transform="rotate(-10 845 381)" fill="#bcbcbc"/><ellipse cx="847.5" cy="381" rx="23.5" ry="27.7" transform="rotate(-10 847.5 381)" fill="#6a6ac0"/><g clip-path="url(#ic4)"><ellipse cx="845.0" cy="381.5" rx="21.5" ry="26.7" transform="rotate(-10 845.0 381.5)" fill="url(#navy4)"/><ellipse cx="847.5" cy="381" rx="8.225" ry="9.694999999999999" fill="url(#hl4)"/></g><polyline points="569,412.7 620.6,391 678.4,401.9" fill="none" stroke="#c8c8c8" stroke-width="1.2"/><line x1="592.5" y1="417.5" x2="650.3" y2="397.2" stroke="#a8a830" stroke-width="3"/><circle cx="584" cy="413" r="1.2" fill="#e0a070"/><circle cx="625" cy="396" r="1.2" fill="#e0a070"/><circle cx="664" cy="403" r="1.2" fill="#e0a070"/><circle cx="621" cy="419" r="1.2" fill="#e0a070"/></g></svg>
<svg class="a" style="left:0;top:0" width="1024" height="120" viewBox="0 0 1024 120"><defs><clipPath id="stc"><rect x="107" y="98" width="814" height="14"/></clipPath></defs><g clip-path="url(#stc)"><path d="M308 112 L320 98" stroke="#8ad0d0" stroke-width="1"/><rect x="448" y="104" width="130" height="7" fill="#0a0e24"/><line x1="448" y1="104.5" x2="578" y2="104.5" stroke="#c090c0" stroke-width="1.2"/><line x1="448.5" y1="98" x2="448.5" y2="105" stroke="#c8b0c8" stroke-width="1"/><rect x="494.5" y="99.5" width="41" height="6" fill="none" stroke="#9a6a5a" stroke-width="1"/><path d="M512 102 L518 102 M515 100 L515 104" stroke="#6a9a6a" stroke-width="1"/><path d="M411 111.5 L448 105 M578 104 L620 111.5 M707 98 L718 112" stroke="#8ad0d0" stroke-width="1"/><circle cx="395" cy="90" r="20" fill="none" stroke="#6a7a30" stroke-width="1"/><circle cx="395" cy="90" r="14" fill="#d8e0a0"/><circle cx="636" cy="90" r="20" fill="none" stroke="#6a7a30" stroke-width="1"/><circle cx="636" cy="90" r="14" fill="#d8e0a0"/><line x1="407.9" y1="95.4" x2="413.5" y2="97.7" stroke="#6a7a30" stroke-width="1"/><line x1="648.9" y1="95.4" x2="654.5" y2="97.7" stroke="#6a7a30" stroke-width="1"/><line x1="404.9" y1="99.9" x2="409.1" y2="104.1" stroke="#6a7a30" stroke-width="1"/><line x1="645.9" y1="99.9" x2="650.1" y2="104.1" stroke="#6a7a30" stroke-width="1"/><line x1="400.4" y1="102.9" x2="402.7" y2="108.5" stroke="#6a7a30" stroke-width="1"/><line x1="641.4" y1="102.9" x2="643.7" y2="108.5" stroke="#6a7a30" stroke-width="1"/><line x1="395.0" y1="104.0" x2="395.0" y2="110.0" stroke="#6a7a30" stroke-width="1"/><line x1="636.0" y1="104.0" x2="636.0" y2="110.0" stroke="#6a7a30" stroke-width="1"/><line x1="389.6" y1="102.9" x2="387.3" y2="108.5" stroke="#6a7a30" stroke-width="1"/><line x1="630.6" y1="102.9" x2="628.3" y2="108.5" stroke="#6a7a30" stroke-width="1"/><line x1="385.1" y1="99.9" x2="380.9" y2="104.1" stroke="#6a7a30" stroke-width="1"/><line x1="626.1" y1="99.9" x2="621.9" y2="104.1" stroke="#6a7a30" stroke-width="1"/><line x1="382.1" y1="95.4" x2="376.5" y2="97.7" stroke="#6a7a30" stroke-width="1"/><line x1="623.1" y1="95.4" x2="617.5" y2="97.7" stroke="#6a7a30" stroke-width="1"/></g></svg>
<svg class="a" style="left:3px;top:88px" width="12" height="12" viewBox="0 0 12 12"><path d="M6 1 L11 5 L9 5 L10 7 L2 7 L3 5 L1 5 Z" fill="#80c8a0"/><rect x="5" y="7" width="2" height="3" fill="#d8a0b8"/><rect x="3.5" y="9.5" width="5" height="1.5" fill="#c090a8"/></svg>
<svg class="a" style="left:86px;top:99px" width="12" height="12" viewBox="0 0 12 12"><path d="M6 1 L11 5 L9 5 L10 7 L2 7 L3 5 L1 5 Z" fill="#80c8a0"/><rect x="5" y="7" width="2" height="3" fill="#d8a0b8"/><rect x="3.5" y="9.5" width="5" height="1.5" fill="#c090a8"/></svg>
<svg class="a" style="left:0;top:0" width="84" height="700" viewBox="0 0 84 700"><defs><linearGradient id="cylg" x1="0" y1="0" x2="0" y2="1"><stop offset="0" stop-color="#8c8c8c"/><stop offset="0.45" stop-color="#ffffff"/><stop offset="0.6" stop-color="#f4f4f4"/><stop offset="1" stop-color="#707070"/></linearGradient><radialGradient id="bluec" cx="0.9" cy="0.5" r="0.9"><stop offset="0" stop-color="#1010a0"/><stop offset="0.6" stop-color="#0a0a80"/><stop offset="1" stop-color="#000010"/></radialGradient><clipPath id="bvc"><rect x="23" y="109" width="61" height="528"/></clipPath></defs><g clip-path="url(#bvc)"><ellipse cx="56" cy="374.5" rx="21" ry="26" fill="url(#bluec)"/><path d="M62 337.5 L84 337.5 L84 412 L62 412 Q50 395 53 374 Q54 350 62 337.5 Z" fill="url(#cylg)"/></g><line x1="48.5" y1="586" x2="48.5" y2="612" stroke="#3a3a90" stroke-width="1"/><line x1="31" y1="611.5" x2="48.5" y2="611.5" stroke="#4a5a4a" stroke-width="1"/><text x="49" y="584" font-family="Liberation Sans" font-size="10" font-weight="bold" fill="#4a4ab0">z</text><text x="49" y="607" font-family="Liberation Sans" font-size="10" fill="#a03050">x</text><text x="25" y="610" font-family="Liberation Sans" font-size="11" fill="#7a8a7a">y</text></svg>
<svg class="a" style="left:100px;top:600px" width="80" height="70" viewBox="100 600 80 70"><line x1="131.5" y1="629" x2="131.5" y2="652" stroke="#4a4ab8" stroke-width="1"/><line x1="112" y1="649" x2="131.5" y2="652" stroke="#a02a3a" stroke-width="1"/><line x1="131.5" y1="652" x2="145" y2="647" stroke="#6a7a6a" stroke-width="1"/><text x="132" y="626" font-family="Liberation Sans" font-size="10" fill="#5050c0">z</text><text x="111" y="646" font-family="Liberation Sans" font-size="11" fill="#b03040">x</text><text x="145" y="646" font-family="Liberation Sans" font-size="12" fill="#7a8a7a">y</text></svg>
<svg class="a" style="left:89px;top:395px" width="8" height="5" viewBox="0 0 8 5"><path d="M0 2.5 L3 0 L8 2.5 L3 5 Z" fill="#b0e0b0"/></svg>
<svg class="a" style="left:4px;top:370px" width="9" height="5" viewBox="0 0 9 5"><path d="M0 2.5 L3 0 L9 2.5 L3 5 Z" fill="#b0e0b0"/></svg>
<div class="a " style="left:0px;top:639px;width:84px;height:17px;background:#777777"></div>
<div class="a " style="left:17px;top:640px;width:66px;height:16px;background:#6a6a6a;border-bottom:2px solid #222"></div>
<div class="a t" style="left:4px;top:641px;font-size:12px;color:#ddd">&lt;</div>
<div class="a t" style="left:61px;top:642px;font-size:11px;color:#e8e8e8">0 / 1</div>
<div class="a " style="left:0px;top:657px;width:84px;height:27px;background:#7e8a5e"></div>
<div class="a " style="left:1px;top:658px;width:8px;height:26px;background:#c8c890;border:1px solid #5a5a30"></div>
<div class="a " style="left:5px;top:661px;width:1px;height:20px;background:#8a8a50"></div>
<div class="a " style="left:0px;top:684px;width:84px;height:3px;background:#6a6a6a"></div>
<div class="a " style="left:2px;top:687px;width:82px;height:21px;background:#dcc8c8"></div>
<div class="a " style="left:2px;top:708px;width:82px;height:2px;background:#fff"></div>
<div class="a " style="left:2px;top:712px;width:82px;height:19px;background:#fff"></div>
<div class="a " style="left:0px;top:731px;width:84px;height:2px;background:#5a6a80"></div>
<div class="a " style="left:0px;top:733px;width:84px;height:6px;background:#3a74c8"></div>
<div class="a " style="left:0px;top:739px;width:84px;height:29px;background:linear-gradient(#5ab85a,#3c9c3c 30%,#34943a 70%,#2a7a2a)"></div>
<div class="a " style="left:12px;top:658px;width:1px;height:13px;background:#b4bc94"></div>
<div class="a " style="left:21px;top:658px;width:1px;height:13px;background:#b4bc94"></div>
<div class="a " style="left:29px;top:658px;width:1px;height:13px;background:#b4bc94"></div>
<div class="a " style="left:37px;top:658px;width:1px;height:13px;background:#b4bc94"></div>
<div class="a " style="left:46px;top:658px;width:1px;height:13px;background:#b4bc94"></div>
<div class="a " style="left:54px;top:658px;width:1px;height:13px;background:#b4bc94"></div>
<div class="a " style="left:62px;top:658px;width:1px;height:13px;background:#b4bc94"></div>
<div class="a " style="left:71px;top:658px;width:1px;height:13px;background:#b4bc94"></div>
<div class="a " style="left:79px;top:658px;width:1px;height:13px;background:#b4bc94"></div>
<svg class="a" style="left:9px;top:742px" width="22" height="20" viewBox="0 0 22 20"><path d="M3 2 Q7 0 10 2 L9 9 Q6 8 2 9 Z" fill="#e8602a"/><path d="M11 3 Q15 5 19 3 L18 10 Q14 12 10 10 Z" fill="#70c030"/><path d="M2 10 Q6 9 9 10 L8 17 Q5 16 1 17 Z" fill="#4a8ae8"/><path d="M10 11 Q14 13 18 11 L17 18 Q13 20 9 18 Z" fill="#f0c020"/></svg>
<div class="a t" style="left:35px;top:743px;font-size:17px;font-weight:bold;font-style:italic;color:#fff;text-shadow:1px 1px 1px #1a4a1a">start</div>
<div class="a " style="left:83px;top:680px;width:841px;height:18px;background:#3c3e3a"></div>
<div class="a " style="left:84px;top:680px;width:16px;height:17px;background:#777;border-right:1px solid #5a5a5a"></div>
<svg class="a" style="left:88px;top:684px" width="8" height="10" viewBox="0 0 8 10"><path d="M6 1 L2 5 L6 9" fill="none" stroke="#e0e0e0" stroke-width="1.2"/></svg>
<div class="a " style="left:100px;top:680px;width:124px;height:17px;background:#7a7a7a;border-bottom:2px solid #1a1a1a;border-right:1px solid #222"></div>
<div class="a " style="left:224px;top:680px;width:15px;height:17px;background:#777"></div>
<svg class="a" style="left:228px;top:684px" width="8" height="10" viewBox="0 0 8 10"><path d="M2 1 L6 5 L2 9" fill="none" stroke="#e0e0e0" stroke-width="1.2"/></svg>
<div class="a t" style="left:145px;top:683px;font-size:12px;color:#eeeeee;letter-spacing:-0.2px">0 / 100</div>
<div class="a " style="left:83px;top:698px;width:841px;height:27px;background:#7d8a5c"></div>
<div class="a " style="left:83px;top:698px;width:841px;height:1px;background:#8a9668"></div>
<div class="a " style="left:96px;top:699px;width:1px;height:13px;background:#b4bc94"></div>
<div class="a " style="left:104px;top:699px;width:1px;height:13px;background:#b4bc94"></div>
<div class="a " style="left:112px;top:699px;width:1px;height:13px;background:#b4bc94"></div>
<div class="a " style="left:121px;top:699px;width:1px;height:13px;background:#b4bc94"></div>
<div class="a " style="left:129px;top:699px;width:1px;height:13px;background:#b4bc94"></div>
<div class="a " style="left:137px;top:699px;width:1px;height:13px;background:#b4bc94"></div>
<div class="a " style="left:146px;top:699px;width:1px;height:13px;background:#b4bc94"></div>
<div class="a " style="left:154px;top:699px;width:1px;height:13px;background:#b4bc94"></div>
<div class="a " style="left:162px;top:699px;width:1px;height:13px;background:#b4bc94"></div>
<div class="a " style="left:170px;top:699px;width:1px;height:13px;background:#b4bc94"></div>
<div class="a " style="left:179px;top:699px;width:1px;height:13px;background:#b4bc94"></div>
<div class="a " style="left:187px;top:699px;width:1px;height:13px;background:#b4bc94"></div>
<div class="a " style="left:195px;top:699px;width:1px;height:13px;background:#b4bc94"></div>
<div class="a " style="left:204px;top:699px;width:1px;height:13px;background:#b4bc94"></div>
<div class="a " style="left:212px;top:699px;width:1px;height:13px;background:#b4bc94"></div>
<div class="a " style="left:220px;top:699px;width:1px;height:13px;background:#b4bc94"></div>
<div class="a " style="left:229px;top:699px;width:1px;height:13px;background:#b4bc94"></div>
<div class="a " style="left:237px;top:699px;width:1px;height:13px;background:#b4bc94"></div>
<div class="a " style="left:245px;top:699px;width:1px;height:13px;background:#b4bc94"></div>
<div class="a " style="left:254px;top:699px;width:1px;height:13px;background:#b4bc94"></div>
<div class="a " style="left:262px;top:699px;width:1px;height:13px;background:#b4bc94"></div>
<div class="a " style="left:270px;top:699px;width:1px;height:13px;background:#b4bc94"></div>
<div class="a " style="left:279px;top:699px;width:1px;height:13px;background:#b4bc94"></div>
<div class="a " style="left:287px;top:699px;width:1px;height:13px;background:#b4bc94"></div>
<div class="a " style="left:295px;top:699px;width:1px;height:13px;background:#b4bc94"></div>
<div class="a " style="left:304px;top:699px;width:1px;height:13px;background:#b4bc94"></div>
<div class="a " style="left:312px;top:699px;width:1px;height:13px;background:#b4bc94"></div>
<div class="a " style="left:320px;top:699px;width:1px;height:13px;background:#b4bc94"></div>
<div class="a " style="left:329px;top:699px;width:1px;height:13px;background:#b4bc94"></div>
<div class="a " style="left:337px;top:699px;width:1px;height:13px;background:#b4bc94"></div>
<div class="a " style="left:345px;top:699px;width:1px;height:13px;background:#b4bc94"></div>
<div class="a " style="left:354px;top:699px;width:1px;height:13px;background:#b4bc94"></div>
<div class="a " style="left:362px;top:699px;width:1px;height:13px;background:#b4bc94"></div>
<div class="a " style="left:370px;top:699px;width:1px;height:13px;background:#b4bc94"></div>
<div class="a " style="left:378px;top:699px;width:1px;height:13px;background:#b4bc94"></div>
<div class="a " style="left:387px;top:699px;width:1px;height:13px;background:#b4bc94"></div>
<div class="a " style="left:395px;top:699px;width:1px;height:13px;background:#b4bc94"></div>
<div class="a " style="left:403px;top:699px;width:1px;height:13px;background:#b4bc94"></div>
<div class="a " style="left:412px;top:699px;width:1px;height:13px;background:#b4bc94"></div>
<div class="a " style="left:420px;top:699px;width:1px;height:13px;background:#b4bc94"></div>
<div class="a " style="left:428px;top:699px;width:1px;height:13px;background:#b4bc94"></div>
<div class="a " style="left:437px;top:699px;width:1px;height:13px;background:#b4bc94"></div>
<div class="a " style="left:445px;top:699px;width:1px;height:13px;background:#b4bc94"></div>
<div class="a " style="left:453px;top:699px;width:1px;height:13px;background:#b4bc94"></div>
<div class="a " style="left:462px;top:699px;width:1px;height:13px;background:#b4bc94"></div>
<div class="a " style="left:470px;top:699px;width:1px;height:13px;background:#b4bc94"></div>
<div class="a " style="left:478px;top:699px;width:1px;height:13px;background:#b4bc94"></div>
<div class="a " style="left:487px;top:699px;width:1px;height:13px;background:#b4bc94"></div>
<div class="a " style="left:495px;top:699px;width:1px;height:13px;background:#b4bc94"></div>
<div class="a " style="left:503px;top:699px;width:1px;height:13px;background:#b4bc94"></div>
<div class="a " style="left:512px;top:699px;width:1px;height:13px;background:#b4bc94"></div>
<div class="a " style="left:520px;top:699px;width:1px;height:13px;background:#b4bc94"></div>
<div class="a " style="left:528px;top:699px;width:1px;height:13px;background:#b4bc94"></div>
<div class="a " style="left:537px;top:699px;width:1px;height:13px;background:#b4bc94"></div>
<div class="a " style="left:545px;top:699px;width:1px;height:13px;background:#b4bc94"></div>
<div class="a " style="left:553px;top:699px;width:1px;height:13px;background:#b4bc94"></div>
<div class="a " style="left:562px;top:699px;width:1px;height:13px;background:#b4bc94"></div>
<div class="a " style="left:570px;top:699px;width:1px;height:13px;background:#b4bc94"></div>
<div class="a " style="left:578px;top:699px;width:1px;height:13px;background:#b4bc94"></div>
<div class="a " style="left:586px;top:699px;width:1px;height:13px;background:#b4bc94"></div>
<div class="a " style="left:595px;top:699px;width:1px;height:13px;background:#b4bc94"></div>
<div class="a " style="left:603px;top:699px;width:1px;height:13px;background:#b4bc94"></div>
<div class="a " style="left:611px;top:699px;width:1px;height:13px;background:#b4bc94"></div>
<div class="a " style="left:620px;top:699px;width:1px;height:13px;background:#b4bc94"></div>
<div class="a " style="left:628px;top:699px;width:1px;height:13px;background:#b4bc94"></div>
<div class="a " style="left:636px;top:699px;width:1px;height:13px;background:#b4bc94"></div>
<div class="a " style="left:645px;top:699px;width:1px;height:13px;background:#b4bc94"></div>
<div class="a " style="left:653px;top:699px;width:1px;height:13px;background:#b4bc94"></div>
<div class="a " style="left:661px;top:699px;width:1px;height:13px;background:#b4bc94"></div>
<div class="a " style="left:670px;top:699px;width:1px;height:13px;background:#b4bc94"></div>
<div class="a " style="left:678px;top:699px;width:1px;height:13px;background:#b4bc94"></div>
<div class="a " style="left:686px;top:699px;width:1px;height:13px;background:#b4bc94"></div>
<div class="a " style="left:695px;top:699px;width:1px;height:13px;background:#b4bc94"></div>
<div class="a " style="left:703px;top:699px;width:1px;height:13px;background:#b4bc94"></div>
<div class="a " style="left:711px;top:699px;width:1px;height:13px;background:#b4bc94"></div>
<div class="a " style="left:720px;top:699px;width:1px;height:13px;background:#b4bc94"></div>
<div class="a " style="left:728px;top:699px;width:1px;height:13px;background:#b4bc94"></div>
<div class="a " style="left:736px;top:699px;width:1px;height:13px;background:#b4bc94"></div>
<div class="a " style="left:745px;top:699px;width:1px;height:13px;background:#b4bc94"></div>
<div class="a " style="left:753px;top:699px;width:1px;height:13px;background:#b4bc94"></div>
<div class="a " style="left:761px;top:699px;width:1px;height:13px;background:#b4bc94"></div>
<div class="a " style="left:770px;top:699px;width:1px;height:13px;background:#b4bc94"></div>
<div class="a " style="left:778px;top:699px;width:1px;height:13px;background:#b4bc94"></div>
<div class="a " style="left:786px;top:699px;width:1px;height:13px;background:#b4bc94"></div>
<div class="a " style="left:794px;top:699px;width:1px;height:13px;background:#b4bc94"></div>
<div class="a " style="left:803px;top:699px;width:1px;height:13px;background:#b4bc94"></div>
<div class="a " style="left:811px;top:699px;width:1px;height:13px;background:#b4bc94"></div>
<div class="a " style="left:819px;top:699px;width:1px;height:13px;background:#b4bc94"></div>
<div class="a " style="left:828px;top:699px;width:1px;height:13px;background:#b4bc94"></div>
<div class="a " style="left:836px;top:699px;width:1px;height:13px;background:#b4bc94"></div>
<div class="a " style="left:844px;top:699px;width:1px;height:13px;background:#b4bc94"></div>
<div class="a " style="left:853px;top:699px;width:1px;height:13px;background:#b4bc94"></div>
<div class="a " style="left:861px;top:699px;width:1px;height:13px;background:#b4bc94"></div>
<div class="a " style="left:869px;top:699px;width:1px;height:13px;background:#b4bc94"></div>
<div class="a " style="left:878px;top:699px;width:1px;height:13px;background:#b4bc94"></div>
<div class="a " style="left:886px;top:699px;width:1px;height:13px;background:#b4bc94"></div>
<div class="a " style="left:894px;top:699px;width:1px;height:13px;background:#b4bc94"></div>
<div class="a " style="left:903px;top:699px;width:1px;height:13px;background:#b4bc94"></div>
<div class="a " style="left:911px;top:699px;width:1px;height:13px;background:#b4bc94"></div>
<div class="a " style="left:919px;top:699px;width:1px;height:13px;background:#b4bc94"></div>
<div class="a t" style="left:164px;top:713px;font-size:11.5px;color:#2a3418">10</div>
<div class="a t" style="left:248px;top:713px;font-size:11.5px;color:#2a3418">20</div>
<div class="a t" style="left:331px;top:713px;font-size:11.5px;color:#2a3418">30</div>
<div class="a t" style="left:414px;top:713px;font-size:11.5px;color:#2a3418">40</div>
<div class="a t" style="left:497px;top:713px;font-size:11.5px;color:#2a3418">50</div>
<div class="a t" style="left:580px;top:713px;font-size:11.5px;color:#2a3418">60</div>
<div class="a t" style="left:664px;top:713px;font-size:11.5px;color:#2a3418">70</div>
<div class="a t" style="left:747px;top:713px;font-size:11.5px;color:#2a3418">80</div>
<div class="a t" style="left:830px;top:713px;font-size:11.5px;color:#2a3418">90</div>
<div class="a t" style="left:913px;top:713px;font-size:11.5px;color:#2a3418">100</div>
<div class="a " style="left:84px;top:699px;width:9px;height:26px;background:#c8c890;border:1px solid #5a5a30"></div>
<div class="a " style="left:88px;top:702px;width:1px;height:20px;background:#8a8a50"></div>
<div class="a " style="left:83px;top:725px;width:841px;height:3px;background:#6a6a6a"></div>
<div class="a " style="left:86px;top:728px;width:294px;height:20px;background:#dcc8c8"></div>
<div class="a " style="left:86px;top:748px;width:294px;height:3px;background:#fff"></div>
<div class="a " style="left:86px;top:750px;width:294px;height:1px;background:#8a8a8a"></div>
<div class="a " style="left:86px;top:751px;width:294px;height:17px;background:#fff"></div>
<div class="a " style="left:380px;top:728px;width:2px;height:40px;background:#f0f0f0"></div>
<div class="a " style="left:384px;top:725px;width:2px;height:43px;background:#555"></div>
<div class="a " style="left:386px;top:725px;width:2px;height:43px;background:#8a8a8a"></div>
<div class="a " style="left:388px;top:725px;width:536px;height:43px;background:#777777"></div>
<div class="a " style="left:391px;top:729px;width:39px;height:21px;border-top:1px solid #5e5e5e;border-left:1px solid #5e5e5e;border-bottom:1px solid #9a9a9a;border-right:1px solid #8a8a8a"></div>
<div class="a t" style="left:397px;top:734px;font-size:11px;color:#f4f4f4;width:32px;overflow:hidden">None S</div>
<svg class="a" style="left:438px;top:732px" width="10" height="13" viewBox="0 0 10 13"><path d="M2.5 6 L2.5 4 A2.5 2.5 0 0 1 7.5 4 L7.5 6" fill="none" stroke="#111" stroke-width="1.4"/><rect x="1" y="6" width="8" height="1.5" fill="#111"/><rect x="1" y="8.5" width="8" height="1.5" fill="#111"/><rect x="1" y="11" width="8" height="1.5" fill="#111"/></svg>
<div class="a " style="left:463px;top:731px;width:15px;height:15px;border:2px solid #111"></div>
<svg class="a" style="left:468px;top:736px" width="5" height="5" viewBox="0 0 5 5"><circle cx="2.5" cy="2.5" r="1.8" fill="none" stroke="#111" stroke-width="1"/></svg>
<div class="a t" style="left:486px;top:734px;font-size:11px;color:#f0f0f0">X:</div>
<div class="a t" style="left:568px;top:734px;font-size:11px;color:#f0f0f0">Y:</div>
<div class="a t" style="left:650px;top:734px;font-size:11px;color:#f0f0f0">Z:</div>
<div class="a " style="left:497px;top:730px;width:56px;height:19px;background:#999;border-top:2px solid #111;border-left:2px solid #111"></div>
<div class="a " style="left:578px;top:730px;width:56px;height:19px;background:#999;border-top:2px solid #111;border-left:2px solid #111"></div>
<div class="a " style="left:660px;top:730px;width:56px;height:19px;background:#999;border-top:2px solid #111;border-left:2px solid #111"></div>
<div class="a " style="left:733px;top:729px;width:99px;height:21px;border-top:1px solid #5e5e5e;border-left:1px solid #5e5e5e;border-bottom:1px solid #9a9a9a;border-right:1px solid #8a8a8a"></div>
<div class="a t" style="left:739px;top:734px;font-size:11px;color:#f4f4f4">Grid = 10.0</div>
<div class="a " style="left:391px;top:754px;width:150px;height:14px;border-top:1px solid #5e5e5e;border-left:1px solid #5e5e5e"></div>
<div class="a t" style="left:397px;top:758px;font-size:11px;color:#f0f0f0;width:144px;overflow:hidden;letter-spacing:-0.15px">Click or click-and-drag to selec</div>
<div class="a " style="left:544px;top:754px;width:97px;height:14px;border-top:1px solid #5e5e5e;border-left:1px solid #5e5e5e;border-right:1px solid #999"></div>
<div class="a t" style="left:549px;top:758px;font-size:11px;color:#f0f0f0">Add Time Tag</div>
<div class="a " style="left:647px;top:753px;width:21px;height:15px;background:#8a9a5c;border:1px solid #5a6a3a"></div>
<svg class="a" style="left:651px;top:756px" width="14" height="12" viewBox="0 0 14 12"><circle cx="7" cy="8" r="6" fill="#f4f4f4" stroke="#222" stroke-width="0.8"/><path d="M3 6 L9 2 L11 6" fill="#aaa"/></svg>
<svg class="a" style="left:678px;top:754px" width="16" height="14" viewBox="0 0 16 14"><rect x="1" y="1" width="10" height="10" fill="none" stroke="#111" stroke-width="1.5" stroke-dasharray="1.5 1.5"/><circle cx="10" cy="9" r="3.5" fill="#bbb" stroke="#222" stroke-width="0.8"/></svg>
<svg class="a" style="left:707px;top:754px" width="16" height="14" viewBox="0 0 16 14"><path d="M2 4 L8 1 L14 4 L14 14 L2 14 Z" fill="#f4f4f4" stroke="#222" stroke-width="0.8"/><path d="M2 4 L8 7 L14 4 M8 7 L8 14" stroke="#222" stroke-width="0.8" fill="none"/></svg>
<div class="a " style="left:733px;top:751px;width:99px;height:17px;border-top:1px solid #9a9a9a;border-left:1px solid #8a8a8a"></div>
<svg class="a" style="left:738px;top:753px" width="22" height="15" viewBox="0 0 22 15"><path d="M2 14 A4 4 0 0 1 8 8" fill="none" stroke="#8a1a1a" stroke-width="3.2"/><path d="M6 14 L10 12" stroke="#fff" stroke-width="1.5"/></svg>
<div class="a t" style="left:748px;top:752px;font-size:10px;color:#111;font-weight:bold">3</div>
<svg class="a" style="left:762px;top:753px" width="22" height="15" viewBox="0 0 22 15"><path d="M2 14 A4 4 0 0 1 8 8" fill="none" stroke="#8a1a1a" stroke-width="3.2"/><path d="M6 14 L10 12" stroke="#fff" stroke-width="1.5"/></svg>
<div class="a t" style="left:772px;top:752px;font-size:10px;color:#111;font-weight:bold">∠</div>
<svg class="a" style="left:787px;top:753px" width="22" height="15" viewBox="0 0 22 15"><path d="M2 14 A4 4 0 0 1 8 8" fill="none" stroke="#8a1a1a" stroke-width="3.2"/><path d="M6 14 L10 12" stroke="#fff" stroke-width="1.5"/></svg>
<div class="a t" style="left:797px;top:752px;font-size:10px;color:#111;font-weight:bold">%</div>
<svg class="a" style="left:811px;top:753px" width="22" height="15" viewBox="0 0 22 15"><path d="M2 14 A4 4 0 0 1 8 8" fill="none" stroke="#8a1a1a" stroke-width="3.2"/><path d="M6 14 L10 12" stroke="#fff" stroke-width="1.5"/></svg>
<div class="a t" style="left:821px;top:752px;font-size:10px;color:#111;font-weight:bold">F</div>
<div class="a " style="left:806px;top:752px;width:1px;height:16px;background:#5e5e5e"></div>
<div class="a " style="left:836px;top:728px;width:47px;height:40px;border-top:1px solid #9a9a9a;border-left:1px solid #9a9a9a;border-right:1px solid #5a5a5a"></div>
<div class="a t" style="left:841px;top:746px;font-size:11px;color:#f4f4f4">Animate</div>
<div class="a " style="left:885px;top:728px;width:1px;height:40px;background:#5e5e5e"></div>
<svg class="a" style="left:889px;top:730px" width="18" height="15" viewBox="0 0 18 15"><rect x="1" y="2" width="2" height="11" fill="#222"/><path d="M9 2 L3 7.5 L9 13 Z M16 2 L10 7.5 L16 13 Z" fill="#484848" stroke="#2a2a2a" stroke-width="0.5"/></svg>
<div class="a " style="left:910px;top:729px;width:1px;height:18px;background:#5e5e5e"></div>
<svg class="a" style="left:916px;top:730px" width="18" height="15" viewBox="0 0 18 15"><path d="M8 2 L2 7.5 L8 13 Z" fill="#484848" stroke="#2a2a2a" stroke-width="0.5"/><rect x="10" y="2" width="2" height="11" fill="#222"/><rect x="13.5" y="2" width="1.5" height="11" fill="#222"/></svg>
<div class="a " style="left:940px;top:730px;width:15px;height:15px;border:2px solid #1a1a1a"></div>
<svg class="a" style="left:941px;top:730px" width="18" height="15" viewBox="0 0 18 15"><path d="M4 3 L11 7.5 L4 12 Z" fill="#484848" stroke="#2a2a2a" stroke-width="0.5"/></svg>
<svg class="a" style="left:953px;top:742px" width="6" height="6" viewBox="0 0 6 6"><path d="M0 6 L6 0 L6 6 Z" fill="#ffffff"/><path d="M2 6 L6 2" stroke="#000" stroke-width="1"/></svg>
<svg class="a" style="left:965px;top:730px" width="18" height="15" viewBox="0 0 18 15"><rect x="2" y="2" width="2" height="11" fill="#222"/><path d="M6 2 L12 7.5 L6 13 Z" fill="#484848" stroke="#2a2a2a" stroke-width="0.5"/></svg>
<div class="a " style="left:983px;top:729px;width:1px;height:18px;background:#5e5e5e"></div>
<svg class="a" style="left:987px;top:730px" width="18" height="15" viewBox="0 0 18 15"><path d="M1 2 L7 7.5 L1 13 Z M8 2 L14 7.5 L8 13 Z" fill="#484848" stroke="#2a2a2a" stroke-width="0.5"/><rect x="15" y="2" width="2" height="11" fill="#222"/></svg>
<div class="a " style="left:1008px;top:729px;width:1px;height:18px;background:#5e5e5e"></div>
<svg class="a" style="left:1014px;top:730px" width="10" height="14" viewBox="0 0 10 14"><circle cx="8" cy="6" r="5" fill="#e8e8e8" stroke="#222" stroke-width="1.2"/></svg>
<svg class="a" style="left:891px;top:755px" width="18" height="9" viewBox="0 0 18 9"><circle cx="4" cy="4.5" r="3" fill="none" stroke="#111" stroke-width="1.8"/><path d="M7 4.5 L17 4.5 M13 4.5 L13 8 M16 4.5 L16 8" stroke="#111" stroke-width="1.8"/></svg>
<div class="a " style="left:914px;top:752px;width:66px;height:16px;background:#9a9a9a;border-top:2px solid #111;border-left:2px solid #111"></div>
<div class="a t" style="left:918px;top:755px;font-size:12px;color:#3a3a3a">0</div>
<div class="a " style="left:983px;top:751px;width:1px;height:17px;background:#5e5e5e"></div>
<svg class="a" style="left:990px;top:753px" width="14" height="15" viewBox="0 0 14 15"><rect x="1" y="1" width="11" height="11" fill="#777" stroke="#111" stroke-width="1.2"/><rect x="1" y="1" width="11" height="2.5" fill="#111"/><circle cx="10" cy="11" r="4" fill="#e8c0c8" stroke="#a02020" stroke-width="1"/><path d="M10 8.5 L10 13 M8 11 L10 13 L12 11" stroke="#a02020" stroke-width="1" fill="none"/></svg>
<svg class="a" style="left:1012px;top:752px" width="12" height="16" viewBox="0 0 12 16"><path d="M1 2 L12 8 L1 14 Z" fill="#c0c0c0" stroke="#222" stroke-width="0.8"/></svg>
<div class="a " style="left:921px;top:97px;width:3px;height:583px;background:#6a6a6a"></div>
<div class="a " style="left:924px;top:96px;width:100px;height:629px;background:#747474"></div>
<div class="a " style="left:926px;top:99px;width:28px;height:24px;border-top:1px solid #959595;border-left:1px solid #959595;border-right:1px solid #666;border-bottom:1px solid #666"></div>
<div class="a " style="left:954px;top:99px;width:28px;height:24px;border-top:1px solid #959595;border-left:1px solid #959595;border-right:1px solid #666;border-bottom:1px solid #666"></div>
<div class="a " style="left:983px;top:99px;width:29px;height:24px;border-top:1px solid #959595;border-left:1px solid #959595;border-right:1px solid #666;border-bottom:1px solid #666"></div>
<div class="a " style="left:1013px;top:99px;width:14px;height:24px;border-top:1px solid #959595;border-left:1px solid #959595;border-right:1px solid #666;border-bottom:1px solid #666"></div>
<svg class="a" style="left:929px;top:100px" width="24" height="22" viewBox="0 0 24 22"><defs><radialGradient id="spk"><stop offset="0" stop-color="#ffffff"/><stop offset="0.5" stop-color="#fff8c0" stop-opacity="0.9"/><stop offset="1" stop-color="#e0d890" stop-opacity="0"/></radialGradient></defs><circle cx="9" cy="8" r="7.5" fill="url(#spk)"/><path d="M9 0.5 L10.5 6.5 L17 8 L10.5 9.5 L9 15.5 L7.5 9.5 L1 8 L7.5 6.5 Z" fill="#fffff0"/><path d="M10 8 L10 19 L12.5 16.8 L15 21.5 L17 20.5 L14.8 16 L18.5 15.5 Z" fill="#f4f4f4" stroke="#2a2a2a" stroke-width="0.8"/></svg>
<svg class="a" style="left:957px;top:102px" width="24" height="20" viewBox="0 0 24 20"><path d="M4 17 A14 14 0 0 1 19 3" fill="none" stroke="#111a40" stroke-width="5"/><path d="M4.5 17 A13 13 0 0 1 19 4" fill="none" stroke="#a0b0e8" stroke-width="1.2"/><path d="M7.5 17 A11 11 0 0 1 19 6.5" fill="none" stroke="#8090d0" stroke-width="1"/><circle cx="3" cy="2" r="0.8" fill="#111"/><circle cx="21" cy="17" r="0.8" fill="#111"/></svg>
<svg class="a" style="left:987px;top:100px" width="22" height="22" viewBox="0 0 22 22"><rect x="7.5" y="1.5" width="7" height="7" fill="#e8e8f0" stroke="#333" stroke-width="0.8"/><path d="M11 8.5 L4 16 M11 8.5 L11 16 M11 8.5 L18 16" stroke="#333" stroke-width="1"/><rect x="2" y="16" width="4.5" height="4.5" fill="#e8e8f0" stroke="#333" stroke-width="0.8"/><rect x="8.8" y="16" width="4.5" height="4.5" fill="#e8e8f0" stroke="#333" stroke-width="0.8"/><rect x="15.5" y="16" width="4.5" height="4.5" fill="#e8e8f0" stroke="#333" stroke-width="0.8"/></svg>
<svg class="a" style="left:1016px;top:104px" width="8" height="16" viewBox="0 0 8 16"><path d="M6 2 A6 6 0 0 0 6 14" fill="none" stroke="#222" stroke-width="1.5"/><path d="M8 4 A4 4 0 0 0 8 12" fill="none" stroke="#222" stroke-width="2"/></svg>
<div class="a " style="left:934px;top:130px;width:90px;height:18px;background:#9a9a9a;border-top:2px solid #111;border-left:2px solid #111"></div>
<div class="a t" style="left:934px;top:157px;font-size:11px;color:#eeeeee">Selection Level:</div>
<div class="a " style="left:934px;top:170px;width:61px;height:21px;border-top:1px solid #959595;border-left:1px solid #959595;border-right:1px solid #555;border-bottom:1px solid #555"></div>
<div class="a t" style="left:939px;top:175px;font-size:11px;color:#505050;text-shadow:1px 1px 0 #8a8a8a">Sub-Object</div>
<div class="a " style="left:997px;top:171px;width:27px;height:20px;border-top:2px solid #3a3a3a;border-left:2px solid #3a3a3a"></div>
<div class="a " style="left:934px;top:200px;width:79px;height:21px;background:#7b8a5a;border-top:1px solid #5a6a3a;border-left:1px solid #5a6a3a;border-right:1px solid #9aa87a;border-bottom:1px solid #9aa87a"></div>
<div class="a t" style="left:949px;top:205px;font-size:11px;color:#eef4d8;letter-spacing:-0.25px">Parameters</div>
<div class="a " style="left:1016px;top:200px;width:8px;height:21px;border-top:1px solid #5a5a5a;border-left:1px solid #5a5a5a"></div>
<div class="a " style="left:928px;top:231px;width:96px;height:488px;border-top:1px solid #666;border-left:1px solid #666;border-bottom:1px solid #999"></div>
<div class="a " style="left:929px;top:232px;width:95px;height:1px;background:#8a8a8a"></div>
<div class="a " style="left:934px;top:237px;width:90px;height:15px;background:#7b8a5a"></div>
<div class="a " style="left:931px;top:240px;width:3px;height:10px;border:1px solid #555;border-right:none"></div>
<div class="a t" style="left:939px;top:237px;font-size:13px;font-weight:bold;color:#f4f4f4">+</div>
<div class="a t" style="left:973px;top:238px;font-size:11px;color:#f0f0f0;letter-spacing:-0.2px">Assign Controller</div>
</body></html>
